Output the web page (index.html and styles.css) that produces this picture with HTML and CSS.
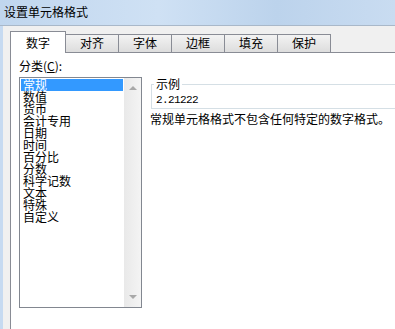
FILE: index.html
```html
<!DOCTYPE html>
<html lang="zh-CN">
<head>
  <meta charset="UTF-8">
  <meta name="viewport" content="width=device-width, initial-scale=1.0">
  <title>设置单元格格式</title>
  <link rel="stylesheet" href="styles.css">
</head>
<body>
  <div class="window">
    <div class="titlebar">设置单元格格式</div>
    <div class="frame">
      <div class="tabs">
        <div class="tab active">数字</div>
        <div class="tab">对齐</div>
        <div class="tab">字体</div>
        <div class="tab">边框</div>
        <div class="tab">填充</div>
        <div class="tab">保护</div>
      </div>
      <div class="panel">
        <div class="left">
          <div class="label">分类(<u>C</u>):</div>
          <div class="listbox">
            <ul class="items">
              <li class="selected">常规</li>
              <li>数值</li>
              <li>货币</li>
              <li>会计专用</li>
              <li>日期</li>
              <li>时间</li>
              <li>百分比</li>
              <li>分数</li>
              <li>科学记数</li>
              <li>文本</li>
              <li>特殊</li>
              <li>自定义</li>
            </ul>
            <div class="scrollbar">
              <span class="arrow up"></span>
              <span class="arrow down"></span>
            </div>
          </div>
        </div>
        <div class="right">
          <fieldset class="sample">
            <legend>示例</legend>
            <div class="value">2.21222</div>
          </fieldset>
          <p class="desc">常规单元格格式不包含任何特定的数字格式。</p>
        </div>
      </div>
    </div>
  </div>
</body>
</html>
```
FILE: styles.css
```css
body {
  margin: 0;
  padding: 0;
  background-color: #f0f0f0;
  font-family: "Noto Sans CJK SC", "DejaVu Sans", sans-serif;
  font-size: 12px;
  color: #000;
  overflow: hidden;
}

.window {
  width: 100%;
  height: 329px;
  display: flex;
  flex-direction: column;
}

.titlebar {
  box-sizing: border-box;
  height: 26px;
  line-height: 24px;
  padding-left: 4px;
  background: linear-gradient(90deg, #c0d6ee 0%, #cfe1f4 40%, #bcd3ec 70%, #c9dcf1 100%);
  border-bottom: 1px solid #a9b8c9;
}

.frame {
  flex: 1;
  display: flex;
  flex-direction: column;
  border-left: 3px solid #c6daf1;
  padding-left: 7px;
  padding-top: 5px;
  background-color: #f0f0f0;
}

.tabs {
  display: flex;
  align-items: flex-end;
  height: 21px;
}

.tab {
  box-sizing: border-box;
  width: 54px;
  height: 18px;
  margin-left: -1px;
  line-height: 16px;
  text-align: center;
  border: 1px solid #898c95;
  border-bottom: none;
  background: linear-gradient(#f3f3f3, #dddddd);
}

.tab.active {
  width: 56px;
  height: 22px;
  margin-left: 0;
  margin-bottom: -1px;
  line-height: 22px;
  background: #fff;
  position: relative;
  z-index: 1;
}

.panel {
  flex: 1;
  display: flex;
  background-color: #fff;
  border: 1px solid #898c95;
  border-right: none;
  border-bottom: none;
  padding-left: 8px;
  min-width: 0;
}

.label {
  margin-top: 7px;
  line-height: 12px;
  height: 12px;
}

.listbox {
  margin-top: 5px;
  width: 123px;
  height: 231px;
  box-sizing: border-box;
  border: 1px solid #828790;
  display: flex;
}

.items {
  list-style: none;
  margin: 0;
  padding: 1px 0 0 0;
  width: 104px;
}

.items li {
  height: 12px;
  line-height: 12px;
  margin: 0 1px;
  padding-left: 2px;
}

.items li.selected {
  background-color: #3399ff;
  color: #fff;
}

.scrollbar {
  width: 17px;
  display: flex;
  flex-direction: column;
  justify-content: space-between;
  align-items: center;
  padding: 8px 0 8px;
  box-sizing: border-box;
  background: linear-gradient(90deg, #e9e9e9, #f4f4f4);
}

.arrow {
  width: 0;
  height: 0;
  border-left: 4px solid transparent;
  border-right: 4px solid transparent;
}

.arrow.up {
  border-bottom: 4px solid #a8a8a8;
}

.arrow.down {
  border-top: 4px solid #a8a8a8;
}

.right {
  flex: 1;
  min-width: 0;
  margin-left: 9px;
  padding-top: 25px;
}

.sample {
  margin: 0;
  padding: 0 0 2px 4px;
  border: 1px solid #d5dfe5;
  border-right: none;
}

.sample legend {
  padding: 0 2px;
  margin-left: -2px;
  line-height: 12px;
}

.value {
  margin-top: 4px;
  font-family: "Liberation Mono", monospace;
  font-size: 11px;
  letter-spacing: -0.6px;
  line-height: 12px;
}

.desc {
  margin: 4px 0 0 -1px;
  line-height: 12px;
  white-space: nowrap;
}
```
